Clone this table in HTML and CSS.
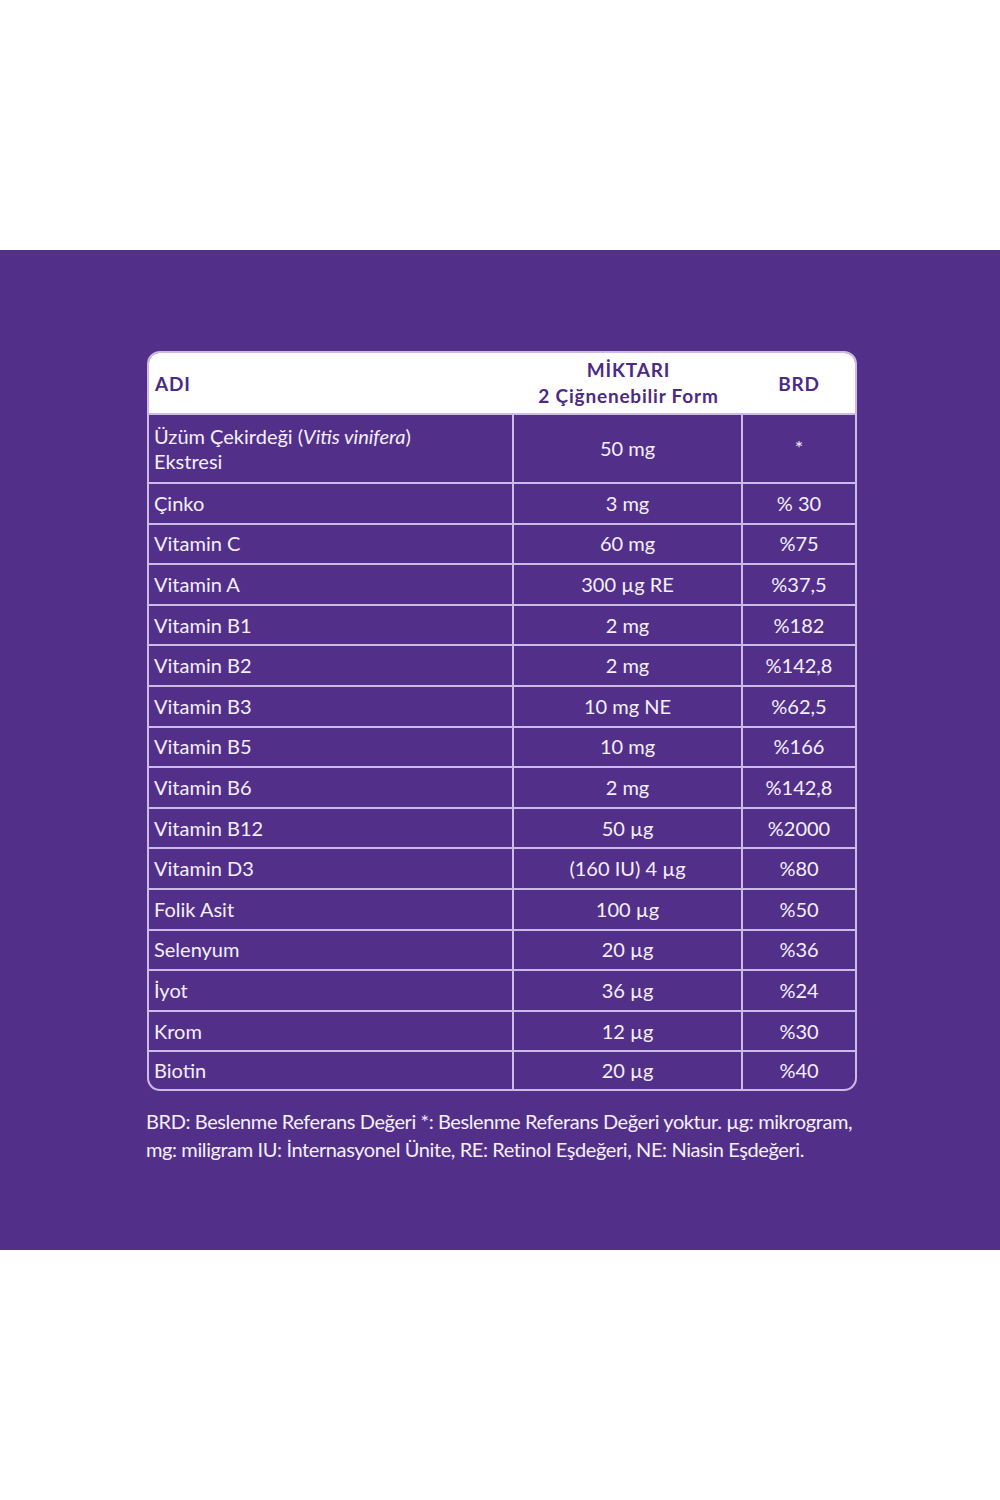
FILE: index.html
```html
<!DOCTYPE html>
<html lang="tr">
<head>
<meta charset="utf-8">
<link rel="stylesheet" href="styles.css">
</head>
<body>
<div class="top"></div>
<section class="band">
  <div class="table">
    <div class="row head">
      <div class="cell name"><span>ADI</span></div>
      <div class="cell amt"><span>MİKTARI<br>2 Çiğnenebilir Form</span></div>
      <div class="cell brd"><span>BRD</span></div>
    </div>
    <div class="row first">
      <div class="cell name"><span>Üzüm Çekirdeği (<i>Vitis vinifera</i>)<br>Ekstresi</span></div>
      <div class="cell amt"><span>50 mg</span></div>
      <div class="cell brd"><span>*</span></div>
    </div>
    <div class="row"><div class="cell name">Çinko</div><div class="cell amt">3 mg</div><div class="cell brd">% 30</div></div>
    <div class="row"><div class="cell name">Vitamin C</div><div class="cell amt">60 mg</div><div class="cell brd">%75</div></div>
    <div class="row"><div class="cell name">Vitamin A</div><div class="cell amt">300 µg RE</div><div class="cell brd">%37,5</div></div>
    <div class="row"><div class="cell name">Vitamin B1</div><div class="cell amt">2 mg</div><div class="cell brd">%182</div></div>
    <div class="row"><div class="cell name">Vitamin B2</div><div class="cell amt">2 mg</div><div class="cell brd">%142,8</div></div>
    <div class="row"><div class="cell name">Vitamin B3</div><div class="cell amt">10 mg NE</div><div class="cell brd">%62,5</div></div>
    <div class="row"><div class="cell name">Vitamin B5</div><div class="cell amt">10 mg</div><div class="cell brd">%166</div></div>
    <div class="row"><div class="cell name">Vitamin B6</div><div class="cell amt">2 mg</div><div class="cell brd">%142,8</div></div>
    <div class="row"><div class="cell name">Vitamin B12</div><div class="cell amt">50 µg</div><div class="cell brd">%2000</div></div>
    <div class="row"><div class="cell name">Vitamin D3</div><div class="cell amt">(160 IU) 4 µg</div><div class="cell brd">%80</div></div>
    <div class="row"><div class="cell name">Folik Asit</div><div class="cell amt">100 µg</div><div class="cell brd">%50</div></div>
    <div class="row"><div class="cell name">Selenyum</div><div class="cell amt">20 µg</div><div class="cell brd">%36</div></div>
    <div class="row"><div class="cell name">İyot</div><div class="cell amt">36 µg</div><div class="cell brd">%24</div></div>
    <div class="row"><div class="cell name">Krom</div><div class="cell amt">12 µg</div><div class="cell brd">%30</div></div>
    <div class="row last"><div class="cell name">Biotin</div><div class="cell amt">20 µg</div><div class="cell brd">%40</div></div>
  </div>
  <p class="note">BRD: Beslenme Referans Değeri *: Beslenme Referans Değeri yoktur. µg: mikrogram,<br>mg: miligram IU: İnternasyonel Ünite, RE: Retinol Eşdeğeri, NE: Niasin Eşdeğeri.</p>
</section>
</body>
</html>
```
FILE: styles.css
```css
* { box-sizing: border-box; }
html, body { margin: 0; padding: 0; background: #ffffff; }
body { font-family: "Lato", "Open Sans", sans-serif; }
.top { height: 250px; }
.band {
  height: 1000px;
  background: #52308a;
  padding: 101px 0 0 147px;
}
.table {
  width: 710px;
  border: 2px solid #cbbbe6;
  border-radius: 13px;
  overflow: hidden;
}
.row {
  display: grid;
  grid-template-columns: 363px 229px 114px;
  height: 40.6px;
  border-top: 2px solid #cbbbe6;
  color: #f4effb;
  font-size: 20px;
  letter-spacing: 0;
}
.row.head {
  border-top: none;
  height: 60px;
  background: #ffffff;
  color: #4b2b83;
  font-weight: 700;
  font-size: 19px;
  letter-spacing: 0.8px;
}
.row.first { height: 69px; }
.row.last { height: 38.6px; }
.cell {
  display: flex;
  align-items: center;
  line-height: 25px;
}
.cell.name { padding-left: 5px; }
.cell.amt, .cell.brd {
  justify-content: center;
  text-align: center;
  border-left: 2px solid #cbbbe6;
}
.row.head .cell.amt, .row.head .cell.brd { border-left: none; }
.row.head .cell.amt { line-height: 26px; padding-left: 4px; }
.row.head .cell.brd { padding-left: 2px; }
.row.head .cell.name { padding-left: 6px; }
.row.first .cell.brd { align-items: flex-start; padding-top: 20px; }
.note {
  margin: 16px 0 0 -1px;
  color: #f4effb;
  font-size: 20px;
  line-height: 28px;
  letter-spacing: -0.4px;
  white-space: nowrap;
}
```
